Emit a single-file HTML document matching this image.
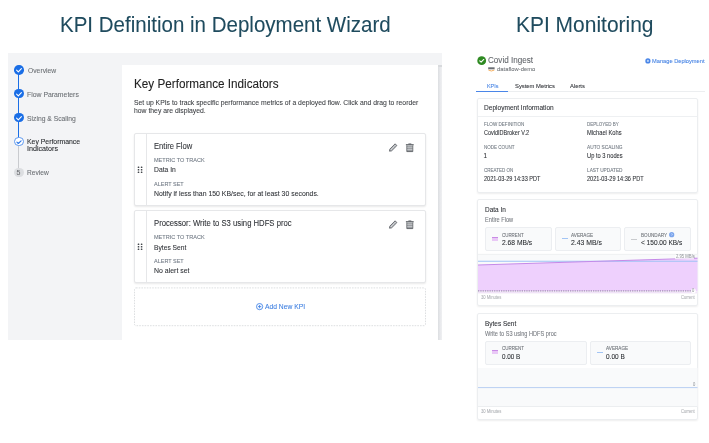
<!DOCTYPE html>
<html><head><meta charset="utf-8"><style>
html,body{margin:0;padding:0;background:#fff;width:709px;height:443px;overflow:hidden;}
body{position:relative;font-family:"Liberation Sans", sans-serif;}
.t{position:absolute;white-space:nowrap;transform-origin:0 0;-webkit-text-stroke:0.08px currentColor;}
.r{position:absolute;}
#L{position:absolute;left:0;top:0;width:709px;height:443px;will-change:transform;}
svg.r{overflow:visible;}
</style></head><body><div id="L">
<div class="t" style="left:59.69px;top:15.00px;font-size:21.40px;line-height:21.40px;color:#1f4b5e;transform:scaleX(0.9592);">KPI Definition in Deployment Wizard</div>
<div class="t" style="left:516.13px;top:14.00px;font-size:21.60px;line-height:21.60px;color:#1f4b5e;transform:scaleX(0.9709);">KPI Monitoring</div>
<div class="r" style="left:8px;top:53px;width:434.00px;height:286.50px;background:#f3f4f6;"></div>
<div class="r" style="left:438px;top:65px;width:4.00px;height:274.50px;background:linear-gradient(90deg,#dcdee1,#e9eaed 60%,#eff0f2);"></div>
<div class="r" style="left:438px;top:65px;width:4.00px;height:2.00px;background:#d8dadd;"></div>
<div class="r" style="left:122px;top:65px;width:316.00px;height:274.50px;background:#fff;"></div>
<div class="r" style="left:18.3px;top:69.8px;width:1.00px;height:71.90px;background:#1a6ee6;"></div>
<div class="r" style="left:18.3px;top:141.7px;width:1.00px;height:30.90px;background:#c9cbcf;"></div>
<div class="r" style="left:14.00px;top:65.00px;width:9.6px;height:9.6px;border-radius:50%;background:#1a6ee6;"><svg width="10" height="10" viewBox="0 0 10 10" style="position:absolute;left:0;top:0"><path d="M2.6 5.2 L4.3 6.8 L7.4 3.6" fill="none" stroke="#fff" stroke-width="1.1" stroke-linecap="round" stroke-linejoin="round"/></svg></div>
<div class="r" style="left:14.00px;top:88.90px;width:9.6px;height:9.6px;border-radius:50%;background:#1a6ee6;"><svg width="10" height="10" viewBox="0 0 10 10" style="position:absolute;left:0;top:0"><path d="M2.6 5.2 L4.3 6.8 L7.4 3.6" fill="none" stroke="#fff" stroke-width="1.1" stroke-linecap="round" stroke-linejoin="round"/></svg></div>
<div class="r" style="left:14.00px;top:112.90px;width:9.6px;height:9.6px;border-radius:50%;background:#1a6ee6;"><svg width="10" height="10" viewBox="0 0 10 10" style="position:absolute;left:0;top:0"><path d="M2.6 5.2 L4.3 6.8 L7.4 3.6" fill="none" stroke="#fff" stroke-width="1.1" stroke-linecap="round" stroke-linejoin="round"/></svg></div>
<div class="r" style="left:14.00px;top:136.90px;width:9.6px;height:9.6px;border-radius:50%;background:#fff;box-sizing:border-box;border:1px solid #5d98ee;"><svg width="10" height="10" viewBox="0 0 10 10" style="position:absolute;left:-1px;top:-1px"><path d="M2.9 5.2 L4.3 6.5 L7.1 3.8" fill="none" stroke="#2f7ae8" stroke-width="1.15" stroke-linecap="round" stroke-linejoin="round"/></svg></div>
<div class="r" style="left:14.00px;top:167.80px;width:9.6px;height:9.6px;border-radius:50%;background:#dcdee1;"></div>
<div class="t" style="left:16.58px;top:169.00px;font-size:7.00px;line-height:7.00px;color:#6b6e72;transform:scaleX(1.0000);">5</div>
<div class="t" style="left:27.82px;top:68.00px;font-size:7.10px;line-height:7.10px;color:#6a6e73;transform:scaleX(0.9515);">Overview</div>
<div class="t" style="left:27.25px;top:92.00px;font-size:7.10px;line-height:7.10px;color:#6a6e73;transform:scaleX(0.9664);">Flow Parameters</div>
<div class="t" style="left:27.24px;top:116.00px;font-size:7.10px;line-height:7.10px;color:#6a6e73;transform:scaleX(0.9530);">Sizing &amp; Scaling</div>
<div class="t" style="left:27.24px;top:139.00px;font-size:7.10px;line-height:7.10px;color:#26292d;transform:scaleX(0.9688);">Key Performance</div>
<div class="t" style="left:27.16px;top:146.00px;font-size:7.10px;line-height:7.10px;color:#26292d;transform:scaleX(1.0090);">Indicators</div>
<div class="t" style="left:27.27px;top:170.00px;font-size:7.10px;line-height:7.10px;color:#6a6e73;transform:scaleX(0.9312);">Review</div>
<div class="t" style="left:133.76px;top:78.00px;font-size:12.00px;line-height:12.00px;color:#222;transform:scaleX(0.9765);">Key Performance Indicators</div>
<div class="t" style="left:134.27px;top:99.00px;font-size:7.30px;line-height:7.30px;color:#3c3f43;transform:scaleX(0.9345);">Set up KPIs to track specific performance metrics of a deployed flow. Click and drag to reorder</div>
<div class="t" style="left:134.23px;top:107.00px;font-size:7.30px;line-height:7.30px;color:#3c3f43;transform:scaleX(0.9344);">how they are displayed.</div>
<div class="r" style="left:134px;top:133.3px;width:292.00px;height:72.70px;background:#fff;border:1px solid #e6e7e9;box-sizing:border-box;border-radius:2px;box-shadow:0 1px 2px rgba(0,0,0,0.09);"></div>
<div class="r" style="left:145.5px;top:133.8px;width:1.00px;height:71.70px;background:#e6e7e9;"></div>
<div class="t" style="left:153.57px;top:142.00px;font-size:8.50px;line-height:8.50px;color:#2f3237;transform:scaleX(0.8991);">Entire Flow</div>
<div class="t" style="left:154.39px;top:157.00px;font-size:6.00px;line-height:6.00px;color:#6d7681;transform:scaleX(0.9253);">METRIC TO TRACK</div>
<div class="t" style="left:154.08px;top:166.00px;font-size:7.30px;line-height:7.30px;color:#2f3237;transform:scaleX(0.9252);">Data In</div>
<div class="t" style="left:153.96px;top:181.00px;font-size:6.00px;line-height:6.00px;color:#6d7681;transform:scaleX(0.9153);">ALERT SET</div>
<div class="t" style="left:153.54px;top:190.00px;font-size:7.30px;line-height:7.30px;color:#2f3237;transform:scaleX(0.9448);">Notify if less than 150 KB/sec, for at least 30 seconds.</div>
<div class="r" style="left:134px;top:210.3px;width:292.00px;height:72.90px;background:#fff;border:1px solid #e6e7e9;box-sizing:border-box;border-radius:2px;box-shadow:0 1px 2px rgba(0,0,0,0.09);"></div>
<div class="r" style="left:145.5px;top:210.8px;width:1.00px;height:71.90px;background:#e6e7e9;"></div>
<div class="t" style="left:154.03px;top:219.00px;font-size:8.50px;line-height:8.50px;color:#2f3237;transform:scaleX(0.9057);">Processor: Write to S3 using HDFS proc</div>
<div class="t" style="left:154.39px;top:234.00px;font-size:6.00px;line-height:6.00px;color:#6d7681;transform:scaleX(0.9253);">METRIC TO TRACK</div>
<div class="t" style="left:153.68px;top:244.00px;font-size:7.30px;line-height:7.30px;color:#2f3237;transform:scaleX(0.9168);">Bytes Sent</div>
<div class="t" style="left:153.96px;top:258.00px;font-size:6.00px;line-height:6.00px;color:#6d7681;transform:scaleX(0.9153);">ALERT SET</div>
<div class="t" style="left:153.64px;top:267.00px;font-size:7.30px;line-height:7.30px;color:#2f3237;transform:scaleX(0.9522);">No alert set</div>
<svg class="r" style="left:0;top:0" width="709" height="443"><rect x="134.5" y="287.9" width="291" height="37.8" rx="1.5" fill="none" stroke="#d9dbde" stroke-width="0.9" stroke-dasharray="1.6 1.1"/></svg>
<div class="t" style="left:264.84px;top:303.00px;font-size:7.00px;line-height:7.00px;color:#3d7fe0;transform:scaleX(0.9613);">Add New KPI</div>
<svg class="r" style="left:476.6px;top:55.6px" width="9.4" height="9.4" viewBox="0 0 10 10"><circle cx="5" cy="5" r="4.7" fill="#2f8a22"/><path d="M2.9 5.2 L4.4 6.6 L7.2 3.7" fill="none" stroke="#fff" stroke-width="1.1" stroke-linecap="round" stroke-linejoin="round"/></svg>
<div class="t" style="left:487.84px;top:56.00px;font-size:8.30px;line-height:8.30px;color:#62666b;transform:scaleX(0.9762);">Covid Ingest</div>
<svg class="r" style="left:488.4px;top:66.6px" width="7" height="5" viewBox="0 0 7 5"><rect x="0.2" y="0.3" width="6.4" height="2" fill="#6b6f75"/><path d="M0.4 3.0 Q3.4 5.0 6.4 3.0" fill="none" stroke="#f5b060" stroke-width="1"/></svg>
<div class="t" style="left:496.69px;top:66.00px;font-size:6.20px;line-height:6.20px;color:#73777c;transform:scaleX(0.9448);">dataflow-demo</div>
<svg class="r" style="left:644.6px;top:58.1px" width="6" height="6" viewBox="0 0 6 6"><circle cx="2.9" cy="2.9" r="2.6" fill="#4a86e8"/><circle cx="2.9" cy="2.9" r="1.1" fill="#b9d2f7"/></svg>
<div class="t" style="left:652.39px;top:58.00px;font-size:6.00px;line-height:6.00px;color:#3f7fe3;transform:scaleX(0.9486);">Manage Deployment</div>
<div class="t" style="left:487.14px;top:83.00px;font-size:6.00px;line-height:6.00px;color:#3f7fe3;transform:scaleX(0.9040);">KPIs</div>
<div class="t" style="left:514.86px;top:83.00px;font-size:6.00px;line-height:6.00px;color:#2f3237;transform:scaleX(0.9724);">System Metrics</div>
<div class="t" style="left:569.59px;top:83.00px;font-size:6.00px;line-height:6.00px;color:#2f3237;transform:scaleX(0.9698);">Alerts</div>
<div class="r" style="left:476px;top:90.8px;width:228.50px;height:0.80px;background:#eceef0;"></div>
<div class="r" style="left:476.2px;top:90.5px;width:32.30px;height:1.40px;background:#4a86e8;"></div>
<div class="r" style="left:476.9px;top:98.2px;width:221.30px;height:94.70px;background:#fff;border:1px solid #eceef0;box-sizing:border-box;border-radius:2px;box-shadow:0 1px 2px rgba(0,0,0,0.07);"></div>
<div class="r" style="left:478px;top:116.4px;width:219.00px;height:0.80px;background:#eef0f2;"></div>
<div class="t" style="left:483.58px;top:104.00px;font-size:7.20px;line-height:7.20px;color:#2f3237;transform:scaleX(0.9133);">Deployment Information</div>
<div class="t" style="left:484.02px;top:122.00px;font-size:5.10px;line-height:5.10px;color:#707880;transform:scaleX(0.8979);">FLOW DEFINITION</div>
<div class="t" style="left:483.73px;top:130.00px;font-size:6.30px;line-height:6.30px;color:#2f3237;transform:scaleX(0.8728);">CovidIDBroker V.2</div>
<div class="t" style="left:587.37px;top:122.00px;font-size:5.10px;line-height:5.10px;color:#707880;transform:scaleX(0.8859);">DEPLOYED BY</div>
<div class="t" style="left:586.99px;top:130.00px;font-size:6.30px;line-height:6.30px;color:#2f3237;transform:scaleX(0.9154);">Michael Kohs</div>
<div class="t" style="left:484.07px;top:145.00px;font-size:5.10px;line-height:5.10px;color:#707880;transform:scaleX(0.8894);">NODE COUNT</div>
<div class="t" style="left:483.48px;top:153.00px;font-size:6.30px;line-height:6.30px;color:#2f3237;transform:scaleX(1.0000);">1</div>
<div class="t" style="left:587.31px;top:145.00px;font-size:5.10px;line-height:5.10px;color:#707880;transform:scaleX(0.9398);">AUTO SCALING</div>
<div class="t" style="left:587.12px;top:153.00px;font-size:6.30px;line-height:6.30px;color:#2f3237;transform:scaleX(0.9090);">Up to 3 nodes</div>
<div class="t" style="left:483.63px;top:168.00px;font-size:5.10px;line-height:5.10px;color:#707880;transform:scaleX(0.8895);">CREATED ON</div>
<div class="t" style="left:483.62px;top:176.00px;font-size:6.30px;line-height:6.30px;color:#2f3237;transform:scaleX(0.8791);">2021-03-29 14:33 PDT</div>
<div class="t" style="left:587.06px;top:168.00px;font-size:5.10px;line-height:5.10px;color:#707880;transform:scaleX(0.9348);">LAST UPDATED</div>
<div class="t" style="left:587.07px;top:176.00px;font-size:6.30px;line-height:6.30px;color:#2f3237;transform:scaleX(0.8839);">2021-03-29 14:36 PDT</div>
<div class="r" style="left:476.9px;top:198.5px;width:221.30px;height:107.70px;background:#fff;border:1px solid #eceef0;box-sizing:border-box;border-radius:2px;box-shadow:0 1px 2px rgba(0,0,0,0.07);"></div>
<div class="t" style="left:485.05px;top:207.00px;font-size:6.80px;line-height:6.80px;color:#2f3237;transform:scaleX(0.9495);">Data In</div>
<div class="t" style="left:484.93px;top:217.00px;font-size:6.30px;line-height:6.30px;color:#777b80;transform:scaleX(0.8944);">Entire Flow</div>
<div class="r" style="left:485.0px;top:227.3px;width:66.50px;height:23.30px;background:#f9fafb;border:1px solid #eceef1;box-sizing:border-box;border-radius:2px;"></div>
<div class="r" style="left:491.8px;top:236.60000000000002px;width:6.20px;height:4.00px;background:#e9c8f6;border-top:1px solid #c98be6;box-sizing:border-box;"></div>
<div class="t" style="left:501.91px;top:233.00px;font-size:5.30px;line-height:5.30px;color:#686d73;transform:scaleX(0.8380);">CURRENT</div>
<div class="t" style="left:501.57px;top:239.00px;font-size:7.30px;line-height:7.30px;color:#2a2d31;transform:scaleX(0.9170);">2.68 MB/s</div>
<div class="r" style="left:554.9px;top:227.3px;width:66.50px;height:23.30px;background:#f9fafb;border:1px solid #eceef1;box-sizing:border-box;border-radius:2px;"></div>
<div class="r" style="left:561.6999999999999px;top:238.20000000000002px;width:6.20px;height:1.20px;background:#a3c5f5;"></div>
<div class="t" style="left:571.26px;top:233.00px;font-size:5.30px;line-height:5.30px;color:#686d73;transform:scaleX(0.8810);">AVERAGE</div>
<div class="t" style="left:571.11px;top:239.00px;font-size:7.30px;line-height:7.30px;color:#2a2d31;transform:scaleX(0.9398);">2.43 MB/s</div>
<div class="r" style="left:624.4px;top:227.3px;width:66.80px;height:23.30px;background:#f9fafb;border:1px solid #eceef1;box-sizing:border-box;border-radius:2px;"></div>
<div class="r" style="left:631.1999999999999px;top:238.5px;width:6.20px;height:1.30px;background:#c9cbce;"></div>
<div class="t" style="left:641.04px;top:233.00px;font-size:5.30px;line-height:5.30px;color:#686d73;transform:scaleX(0.8703);">BOUNDARY</div>
<div class="t" style="left:641.02px;top:239.00px;font-size:7.30px;line-height:7.30px;color:#2a2d31;transform:scaleX(0.8944);">&lt; 150.00 KB/s</div>
<svg class="r" style="left:669.20px;top:232.40px" width="6" height="6" viewBox="0 0 6 6"><circle cx="2.7" cy="2.7" r="2.6" fill="#7ba5ec"/><path d="M1.9 2.3 Q2.7 1.2 3.5 2.1 Q3.6 2.8 2.7 3.2 V3.6" fill="none" stroke="#dce8fb" stroke-width="0.6"/></svg>
<svg class="r" style="left:478.3px;top:253.5px" width="219.5" height="39.5" viewBox="0 0 219.5 39.5">
<rect x="0" y="0" width="219.5" height="39.5" fill="#f9fafb"/>
<line x1="0" y1="0.4" x2="219.5" y2="0.4" stroke="#eceef0" stroke-width="0.8"/>
<path d="M0 11.0 L219.5 4.2 L219.5 37.2 L0 37.2 Z" fill="#eed0fd"/>
<line x1="0" y1="7.2" x2="219.5" y2="7.2" stroke="#9fc3f5" stroke-width="1.1"/>
<path d="M0 11.0 L219.5 4.2" stroke="#c58ae8" stroke-width="1"/>
<line x1="0" y1="37.0" x2="214" y2="37.0" stroke="#7f7190" stroke-width="1.0" stroke-dasharray="1.3 1.0"/>
<rect x="0" y="37.7" width="219.5" height="1.6" fill="#f1e3f8"/>
<rect x="197" y="1.2" width="19" height="4.0" fill="#ffffff" opacity="0.75"/>
<circle cx="215.5" cy="36.9" r="2.4" fill="#ffffff"/>
</svg>
<div class="t" style="left:675.85px;top:255.00px;font-size:4.90px;line-height:4.90px;color:#9a9ea3;transform:scaleX(0.8608);">2.95 MB/s</div>
<div class="t" style="left:692.08px;top:289.00px;font-size:4.80px;line-height:4.80px;color:#9a9ea3;transform:scaleX(0.8503);">0</div>
<div class="t" style="left:480.81px;top:296.00px;font-size:4.60px;line-height:4.60px;color:#b0b3b7;transform:scaleX(0.9088);">30 Minutes</div>
<div class="t" style="left:680.99px;top:296.00px;font-size:4.60px;line-height:4.60px;color:#b0b3b7;transform:scaleX(0.8940);">Current</div>
<div class="r" style="left:476.9px;top:312.8px;width:221.30px;height:107.10px;background:#fff;border:1px solid #eceef0;box-sizing:border-box;border-radius:2px;box-shadow:0 1px 2px rgba(0,0,0,0.07);"></div>
<div class="t" style="left:484.63px;top:321.00px;font-size:6.80px;line-height:6.80px;color:#2f3237;transform:scaleX(0.9494);">Bytes Sent</div>
<div class="t" style="left:484.86px;top:331.00px;font-size:6.30px;line-height:6.30px;color:#777b80;transform:scaleX(0.8867);">Write to S3 using HDFS proc</div>
<div class="r" style="left:485.0px;top:340.6px;width:101.60px;height:24.20px;background:#f9fafb;border:1px solid #eceef1;box-sizing:border-box;border-radius:2px;"></div>
<div class="r" style="left:491.8px;top:349.90000000000003px;width:6.20px;height:4.00px;background:#e9c8f6;border-top:1px solid #c98be6;box-sizing:border-box;"></div>
<div class="t" style="left:501.70px;top:346.00px;font-size:5.30px;line-height:5.30px;color:#686d73;transform:scaleX(0.8475);">CURRENT</div>
<div class="t" style="left:501.71px;top:353.00px;font-size:7.30px;line-height:7.30px;color:#2a2d31;transform:scaleX(0.8665);">0.00 B</div>
<div class="r" style="left:589.9px;top:340.6px;width:101.30px;height:24.20px;background:#f9fafb;border:1px solid #eceef1;box-sizing:border-box;border-radius:2px;"></div>
<div class="r" style="left:596.6999999999999px;top:351.5px;width:6.20px;height:1.20px;background:#a3c5f5;"></div>
<div class="t" style="left:606.26px;top:346.00px;font-size:5.30px;line-height:5.30px;color:#686d73;transform:scaleX(0.8810);">AVERAGE</div>
<div class="t" style="left:606.32px;top:353.00px;font-size:7.30px;line-height:7.30px;color:#2a2d31;transform:scaleX(0.8869);">0.00 B</div>
<svg class="r" style="left:478.3px;top:367.5px" width="219.5" height="39" viewBox="0 0 219.5 39">
<rect x="0" y="0" width="219.5" height="39" fill="#f9fafb"/>
<line x1="0" y1="19.6" x2="219.5" y2="19.6" stroke="#b9cff2" stroke-width="1"/>
<line x1="0" y1="38.5" x2="219.5" y2="38.5" stroke="#eceef0" stroke-width="1"/>
</svg>
<div class="t" style="left:692.89px;top:383.00px;font-size:4.80px;line-height:4.80px;color:#9a9ea3;transform:scaleX(0.8503);">0</div>
<div class="t" style="left:480.81px;top:410.00px;font-size:4.60px;line-height:4.60px;color:#b0b3b7;transform:scaleX(0.9088);">30 Minutes</div>
<div class="t" style="left:680.99px;top:410.00px;font-size:4.60px;line-height:4.60px;color:#b0b3b7;transform:scaleX(0.8940);">Current</div>
<svg class="r" style="left:0;top:0" width="709" height="443" viewBox="0 0 709 443"><rect x="137.7" y="166.60000000000002" width="1.6" height="1.4" rx="0.5" fill="#44484d"/><rect x="137.7" y="169.10000000000002" width="1.6" height="1.4" rx="0.5" fill="#44484d"/><rect x="137.7" y="171.60000000000002" width="1.6" height="1.4" rx="0.5" fill="#44484d"/><rect x="140.79999999999998" y="166.60000000000002" width="1.6" height="1.4" rx="0.5" fill="#44484d"/><rect x="140.79999999999998" y="169.10000000000002" width="1.6" height="1.4" rx="0.5" fill="#44484d"/><rect x="140.79999999999998" y="171.60000000000002" width="1.6" height="1.4" rx="0.5" fill="#44484d"/><g transform="translate(0 0)"><path d="M389.5 151.2 L391.65 150.81 L396.88 145.58 L395.12 143.82 L389.89 149.05 Z" fill="#b4b7bb" stroke="#50545a" stroke-width="0.8" stroke-linejoin="round"/><path d="M391.0 149.7 L395.3 145.4" stroke="#ffffff" stroke-width="0.8" stroke-dasharray="0.9 0.9"/></g><g transform="translate(0 0)"><rect x="405.9" y="144.2" width="7.8" height="1.1" fill="#55595e"/><rect x="408.4" y="143.5" width="2.9" height="0.9" fill="#55595e"/><path d="M406.8 145.4 H412.8 V151.4 Q412.8 152.1 412.1 152.1 H407.5 Q406.8 152.1 406.8 151.4 Z" fill="#9c9fa3"/><path d="M406.8 145.4 V151.6 H412.8 V145.4" fill="none" stroke="#5d6166" stroke-width="0.8"/><path d="M407.3 147.3 H412.3 M407.3 149.5 H412.3" stroke="#d8dadd" stroke-width="0.6"/></g><rect x="137.7" y="243.60000000000002" width="1.6" height="1.4" rx="0.5" fill="#44484d"/><rect x="137.7" y="246.10000000000002" width="1.6" height="1.4" rx="0.5" fill="#44484d"/><rect x="137.7" y="248.60000000000002" width="1.6" height="1.4" rx="0.5" fill="#44484d"/><rect x="140.79999999999998" y="243.60000000000002" width="1.6" height="1.4" rx="0.5" fill="#44484d"/><rect x="140.79999999999998" y="246.10000000000002" width="1.6" height="1.4" rx="0.5" fill="#44484d"/><rect x="140.79999999999998" y="248.60000000000002" width="1.6" height="1.4" rx="0.5" fill="#44484d"/><g transform="translate(0 77.0)"><path d="M389.5 151.2 L391.65 150.81 L396.88 145.58 L395.12 143.82 L389.89 149.05 Z" fill="#b4b7bb" stroke="#50545a" stroke-width="0.8" stroke-linejoin="round"/><path d="M391.0 149.7 L395.3 145.4" stroke="#ffffff" stroke-width="0.8" stroke-dasharray="0.9 0.9"/></g><g transform="translate(0 77.0)"><rect x="405.9" y="144.2" width="7.8" height="1.1" fill="#55595e"/><rect x="408.4" y="143.5" width="2.9" height="0.9" fill="#55595e"/><path d="M406.8 145.4 H412.8 V151.4 Q412.8 152.1 412.1 152.1 H407.5 Q406.8 152.1 406.8 151.4 Z" fill="#9c9fa3"/><path d="M406.8 145.4 V151.6 H412.8 V145.4" fill="none" stroke="#5d6166" stroke-width="0.8"/><path d="M407.3 147.3 H412.3 M407.3 149.5 H412.3" stroke="#d8dadd" stroke-width="0.6"/></g><circle cx="259.6" cy="306.6" r="3.1" fill="none" stroke="#4586e6" stroke-width="0.9"/><path d="M259.6 304.9 V308.3 M257.9 306.6 H261.3" stroke="#4586e6" stroke-width="0.9"/></svg>
</div></body></html>
